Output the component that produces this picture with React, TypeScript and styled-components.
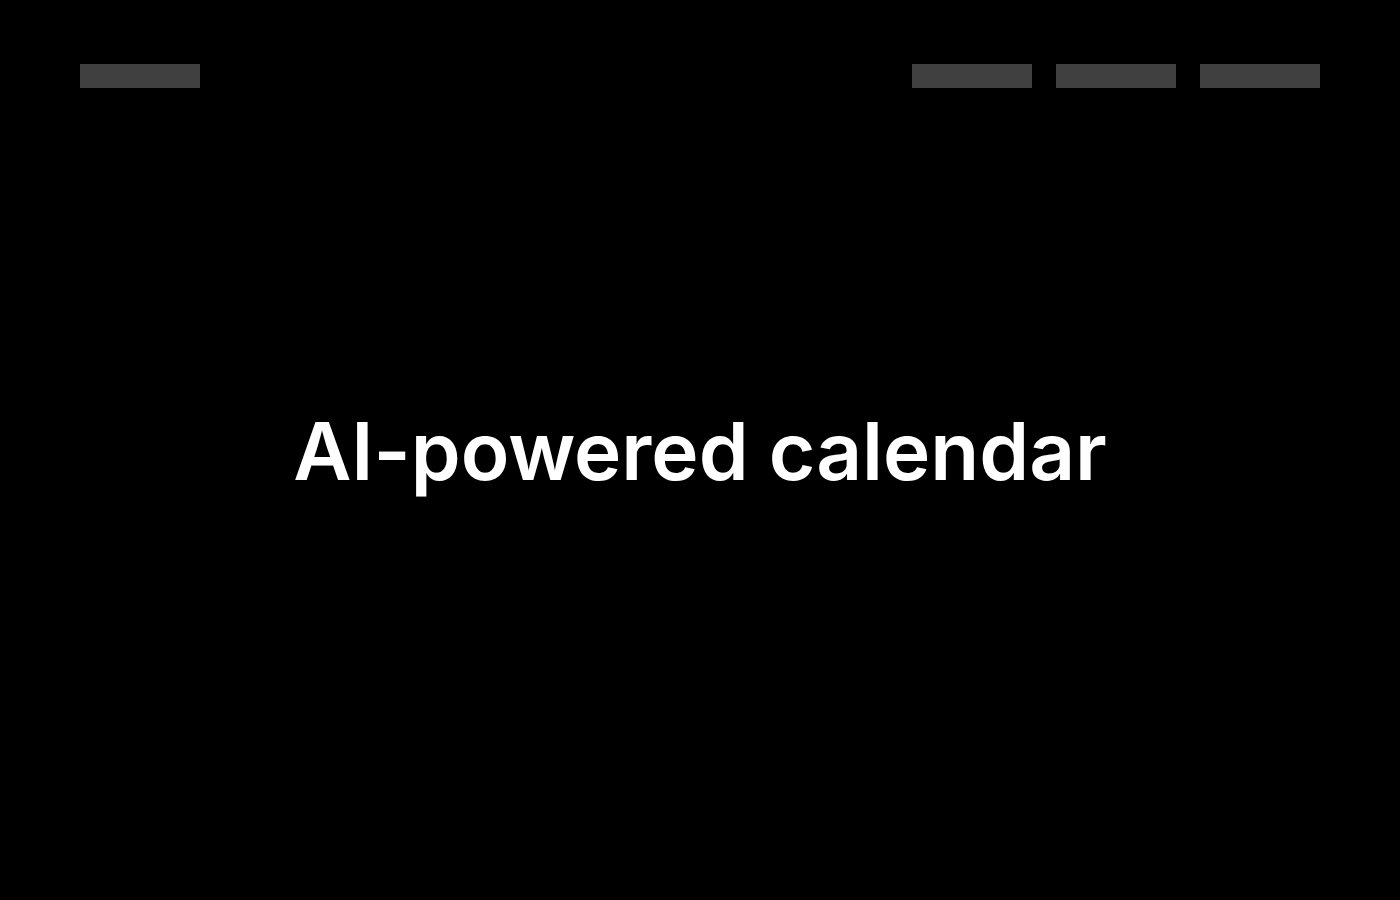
import React from "react";
import styled, { createGlobalStyle } from "styled-components";

const Global = createGlobalStyle`
  html, body { margin: 0; padding: 0; background: #000; }
  body { font-family: Inter, "Noto Sans", sans-serif; }
`;

const Page = styled.div`
  box-sizing: border-box;
  height: 100vh;
  display: flex;
  flex-direction: column;
  padding: 64px 80px;
  background: #000;
`;

const Header = styled.header`
  display: flex;
  justify-content: space-between;
  align-items: center;
`;

const Nav = styled.nav`
  display: flex;
  gap: 24px;
`;

const Placeholder = styled.div`
  width: 120px;
  height: 24px;
  background: #404040;
`;

const Main = styled.main`
  flex: 1;
  display: flex;
  align-items: center;
  justify-content: center;
`;

const Title = styled.h1`
  margin: 0;
  font-family: Inter, "Noto Sans", sans-serif;
  font-weight: 600;
  font-size: 80px;
  line-height: 1.2;
  color: #fff;
  letter-spacing: 0;
  margin-top: -22px;
`;

export default function App() {
  return (
    <>
      <Global />
      <Page>
        <Header>
          <Placeholder />
          <Nav>
            <Placeholder />
            <Placeholder />
            <Placeholder />
          </Nav>
        </Header>
        <Main>
          <Title>AI-powered calendar</Title>
        </Main>
      </Page>
    </>
  );
}
